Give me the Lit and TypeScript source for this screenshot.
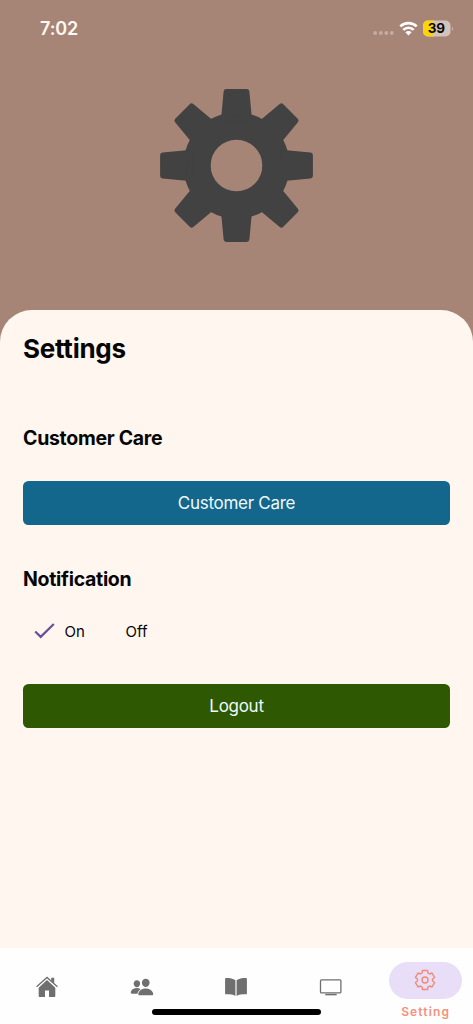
import { LitElement, html, css, svg } from "lit";
import { customElement } from "lit/decorators.js";

// Outline of a six-toothed cog centred on the origin.
const cogOutline = (): string => {
  const corners: string[] = [];
  for (let tooth = 0; tooth < 6; tooth++) {
    for (const [radius, offset] of [[7.6, -22], [9.9, -15], [9.9, 15], [7.6, 22]]) {
      const angle = ((tooth * 60 + offset - 90) * Math.PI) / 180;
      corners.push(`${(radius * Math.cos(angle)).toFixed(2)} ${(radius * Math.sin(angle)).toFixed(2)}`);
    }
  }
  return `M${corners.join("L")}Z`;
};

@customElement("app-root")
export class AppRoot extends LitElement {
  static styles = css`
    :host { display: block; font-family: Inter, "Liberation Sans", sans-serif; color: #060606; }
    * { box-sizing: border-box; }
    .screen { height: 1024px; width: 473px; display: flex; flex-direction: column; background: #a68577; overflow: hidden; position: relative; }
    svg { display: block; flex: none; }
    .status { height: 57px; display: flex; align-items: center; justify-content: space-between; padding: 0 19px 0 40px; }
    .time { font-size: 18px; font-weight: 600; color: #fff7f0; line-height: 22px; letter-spacing: -0.1px; }
    .signals { margin-bottom: 2px; }
    .hero { height: 253px; display: flex; justify-content: center; padding-top: 31px; }
    .card { flex: 1; background: #fff6f0; border-radius: 32px 32px 0 0; padding: 22px 23px 0; display: flex; flex-direction: column; }
    h1 { margin: 0; font-size: 26px; line-height: 34px; font-weight: 700; letter-spacing: -0.25px; }
    h2 { margin: 0; font-size: 19.5px; line-height: 24px; font-weight: 700; letter-spacing: -0.3px; }
    .care { margin-top: 60px; }
    .notif { margin-top: 42px; }
    .btn { border: 0; width: 427px; height: 43.5px; border-radius: 5.5px; font: 400 17px/24px Inter, sans-serif; letter-spacing: -0.28px; padding: 1px 0 0; color: #eff8fb; flex: none; }
    .blue { background: #14678c; margin-top: 31px; }
    .green { background: #2e5902; margin-top: 41px; }
    .options { display: flex; height: 24px; align-items: center; margin-top: 28.5px; padding-left: 10.5px; font-size: 15px; }
    .on { width: 61px; margin-left: 10px; }
    .tabs { height: 76px; background: #fffefe; display: grid; grid-template-columns: repeat(5, 94.6px); flex: none; }
    .tab { display: flex; justify-content: center; padding-top: 27px; }
    .active { flex-direction: column; align-items: center; justify-content: flex-start; padding: 14px 0 0; }
    .pill { width: 73px; height: 37px; border-radius: 19px; background: #e8def8; display: flex; align-items: center; justify-content: center; padding: 0 1px 2px 0; }
    .label { font-size: 12px; line-height: 16px; letter-spacing: 1.15px; margin-top: 5px; color: #f5907c; font-weight: 600; }
    .indicator { position: absolute; left: 152px; top: 1009px; width: 169px; height: 6px; border-radius: 3px; background: #000; }
  `;

  render() {
    const teeth = [0, 45, 90, 135, 180, 225, 270, 315];
    return html`
      <div class="screen">
        <header class="status">
          <span class="time">7:02</span>
          <svg class="signals" width="81" height="20" viewBox="373 18 81 20">
            <g fill="#c5aca2"><circle cx="375.2" cy="33" r="1.9"/><circle cx="380.8" cy="33" r="1.9"/><circle cx="386.3" cy="33" r="1.9"/><circle cx="391.8" cy="33" r="1.9"/></g>
            <g fill="none" stroke="#fff" stroke-width="2.7"><path d="M400.3 26.4a11.8 11.8 0 0 1 16.4 0"/><path d="M403.3 29.9a7.4 7.4 0 0 1 10.4 0"/></g>
            <path fill="#fff" d="M408.5 35.4l-3.1-3.2a4.4 4.4 0 0 1 6.2 0z"/>
            <clipPath id="bat"><rect x="423" y="20.5" width="27.5" height="16" rx="5"/></clipPath>
            <g clip-path="url(#bat)"><rect x="423" y="20" width="28" height="17" fill="#d4c3bb"/><rect x="423" y="20" width="11" height="17" fill="#fbd50b"/></g>
            <path d="M452 26.2q1.8 2.3 0 4.6z" fill="#d4c3bb"/>
            <text x="436.4" y="33.4" text-anchor="middle" font-family="Inter" font-weight="700" font-size="13.5" fill="#080808">39</text>
          </svg>
        </header>
        <section class="hero">
          <svg width="155" height="155" viewBox="-77.5 -77.5 155 155">
            <circle r="39.4" fill="none" stroke="#424242" stroke-width="27.2"/>
            ${teeth.map((a) => svg`<path transform="rotate(${a})" d="M-10.2-73.7H10.2L12.7-47H-12.7Z" fill="#424242" stroke="#424242" stroke-width="5.4" stroke-linejoin="round"/>`)}
          </svg>
        </section>
        <main class="card">
          <h1>Settings</h1>
          <h2 class="care">Customer Care</h2>
          <button class="btn blue">Customer Care</button>
          <h2 class="notif">Notification</h2>
          <div class="options">
            <svg width="21" height="18" viewBox="0 0 21 18" fill="none" stroke="#65509f" stroke-width="2.2"><path d="M1.2 9.5l5.5 5.4L19.8 2"/></svg>
            <span class="on">On</span><span>Off</span>
          </div>
          <button class="btn green">Logout</button>
        </main>
        <nav class="tabs">
          <div class="tab">
            <svg width="24" height="24" viewBox="0 0 24 24" fill="#6f6f6f"><path d="M12 5.1L3.7 12.8V21q0 1 1 1H10v-6.5h4V22h5.3q1 0 1-1v-8.2z"/><path d="M1.6 11.8L12 2.4l10.4 9.4M17.8 7V3.2" fill="none" stroke="#6f6f6f" stroke-width="1.3"/><path d="M16.2 2.7h3v5.8l-3-2.7z"/></svg>
          </div>
          <div class="tab">
            <svg width="24" height="24" viewBox="0 0 512 512" fill="#6f6f6f"><path d="M336 256c-20.56 0-40.44-9.18-56-25.84-15.13-16.25-24.37-37.92-26-61-1.74-24.62 5.77-47.26 21.14-63.76S312 80 336 80c23.83 0 45.38 9.06 60.7 25.52 15.47 16.62 23 39.22 21.26 63.63-1.67 23.11-10.9 44.77-26 61C376.44 246.82 356.57 256 336 256zM467.83 432H204.18a27.71 27.71 0 0 1-22-10.67 30.22 30.22 0 0 1-5.26-25.79c8.42-33.81 29.28-61.85 60.32-81.08C264.79 297.4 299.86 288 336 288c36.85 0 71 9 98.71 26.05 31.11 19.13 52 47.33 60.38 81.55a30.27 30.27 0 0 1-5.32 25.78A27.68 27.68 0 0 1 467.83 432zM147 260c-35.19 0-66.13-32.72-69-72.93-1.42-20.6 5-39.65 18-53.62 12.86-13.83 31-21.45 51-21.45s38 7.66 50.93 21.57c13.1 14.08 19.5 33.09 18 53.52-2.87 40.2-33.8 72.91-68.93 72.91zM212.66 291.45c-17.59-8.6-40.42-12.9-65.65-12.9-29.46 0-58.07 7.68-80.57 21.62-25.51 15.83-42.67 38.88-49.6 66.71a27.39 27.39 0 0 0 4.79 23.36A25.32 25.32 0 0 0 41.72 400h111a8 8 0 0 0 7.87-6.57c.11-.63.25-1.26.41-1.88 8.48-34.06 28.35-62.84 57.71-83.82a8 8 0 0 0-.63-13.39c-1.57-.92-3.37-1.89-5.42-2.89z"/></svg>
          </div>
          <div class="tab">
            <svg width="24" height="24" viewBox="0 0 24 24" fill="#6f6f6f"><path d="M11.4 5.2C9.4 3.7 5.8 3.1 2 3.1q-.9 0-.9.9v14.4q0 .9.9.9c3.8 0 7.5.2 9.4 1.8zM12.6 5.2c2-1.5 5.6-2.1 9.4-2.1q.9 0 .9.9v14.4q0 .9-.9.9c-3.8 0-7.5.2-9.4 1.8z"/></svg>
          </div>
          <div class="tab">
            <svg width="24" height="24" viewBox="0 0 24 24" fill="none" stroke="#6f6f6f" stroke-width="1.3"><rect x="1.5" y="4.9" width="20.4" height="13" rx="1"/><path d="M6.3 19.6h11.4" stroke-width="1.5"/></svg>
          </div>
          <div class="tab active">
            <div class="pill">
              <svg width="24" height="24" viewBox="-12 -12 24 24" fill="none" stroke="#f28a76" stroke-width="1.4" stroke-linejoin="round"><circle r="3"/><path d=${cogOutline()}/></svg>
            </div>
            <span class="label">Setting</span>
          </div>
        </nav>
        <div class="indicator"></div>
      </div>
    `;
  }
}
